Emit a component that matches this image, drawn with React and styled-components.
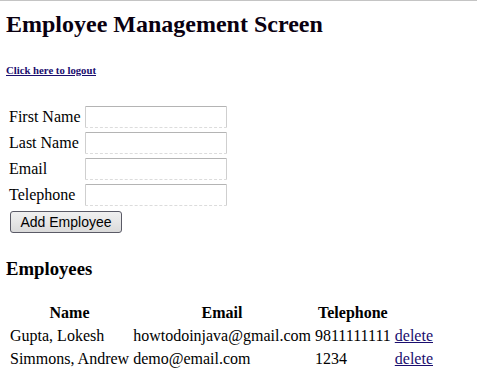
import React from "react";
import styled, { createGlobalStyle } from "styled-components";

const GlobalStyle = createGlobalStyle`
  html, body { background: #fff; }
  body {
    margin: 0;
    border-top: 1px solid #c4c4c4;
    padding: 9px 8px 8px 6px;
    font-family: "Liberation Serif", "Times New Roman", serif;
    font-size: 16px;
    color: #000;
  }
`;

const Title = styled.h1`
  font-size: 24px;
  font-weight: bold;
  margin: 0 0 26px 0;
  line-height: 28px;
  color: #0a0010;
`;

const LogoutHeading = styled.h6`
  font-size: 10.72px;
  font-weight: bold;
  margin: 0 0 27px 0;
`;

const Link = styled.a`
  color: #1a0d6e;
  text-decoration: underline;
`;

const FormTable = styled.table`
  border-spacing: 2px;
`;

const LabelCell = styled.td`
  padding: 1px;
  white-space: nowrap;
`;

const InputCell = styled.td`
  padding: 1px;
`;

const TextInput = styled.input`
  box-sizing: border-box;
  width: 142px;
  height: 22px;
  border: 1px solid #cfcfcf;
  border-top-color: #b4b4b4;
  border-bottom: 1px dashed #dcdcdc;
  border-radius: 1px;
  background: #fff;
  margin: 0;
`;

const ButtonCell = styled.td`
  padding: 0;
`;

const AddButton = styled.button`
  box-sizing: border-box;
  width: 112px;
  height: 22px;
  margin: 2px 0 0 2px;
  padding: 0;
  border: 1px solid #5a5a66;
  border-radius: 3px;
  background: linear-gradient(#f0f0f0 0%, #e6e6e6 50%, #dadada 100%);
  font-family: "Liberation Sans", Arial, sans-serif;
  font-size: 14px;
  color: #000;
`;

const SectionTitle = styled.h3`
  font-size: 18.72px;
  font-weight: bold;
  margin: 23px 0 20px 0;
  line-height: 22px;
`;

const DataTable = styled.table`
  border-spacing: 2px;
  margin-left: 1px;
`;

const Th = styled.th`
  padding: 1px;
  font-weight: bold;
  text-align: center;
  line-height: 19px;
`;

const Td = styled.td`
  padding: 1px;
  white-space: nowrap;
  line-height: 19px;
`;

const employees = [
  { name: "Gupta, Lokesh", email: "howtodoinjava@gmail.com", phone: "9811111111" },
  { name: "Simmons, Andrew", email: "demo@email.com", phone: "1234" },
];

const fields = ["First Name", "Last Name", "Email", "Telephone"];

export default function App() {
  return (
    <>
      <GlobalStyle />
      <Title>Employee Management Screen</Title>
      <LogoutHeading>
        <Link href="#">Click here to logout</Link>
      </LogoutHeading>
      <form onSubmit={(e) => e.preventDefault()}>
        <FormTable>
          <tbody>
            {fields.map((f) => (
              <tr key={f}>
                <LabelCell>{f}</LabelCell>
                <InputCell>
                  <TextInput type="text" />
                </InputCell>
              </tr>
            ))}
            <tr>
              <ButtonCell colSpan={2}>
                <AddButton type="submit">Add Employee</AddButton>
              </ButtonCell>
            </tr>
          </tbody>
        </FormTable>
      </form>
      <SectionTitle>Employees</SectionTitle>
      <DataTable>
        <thead>
          <tr>
            <Th>Name</Th>
            <Th>Email</Th>
            <Th>Telephone</Th>
            <Th></Th>
          </tr>
        </thead>
        <tbody>
          {employees.map((e) => (
            <tr key={e.name}>
              <Td>{e.name}</Td>
              <Td>{e.email}</Td>
              <Td>{e.phone}</Td>
              <Td>
                <Link href="#">delete</Link>
              </Td>
            </tr>
          ))}
        </tbody>
      </DataTable>
    </>
  );
}
